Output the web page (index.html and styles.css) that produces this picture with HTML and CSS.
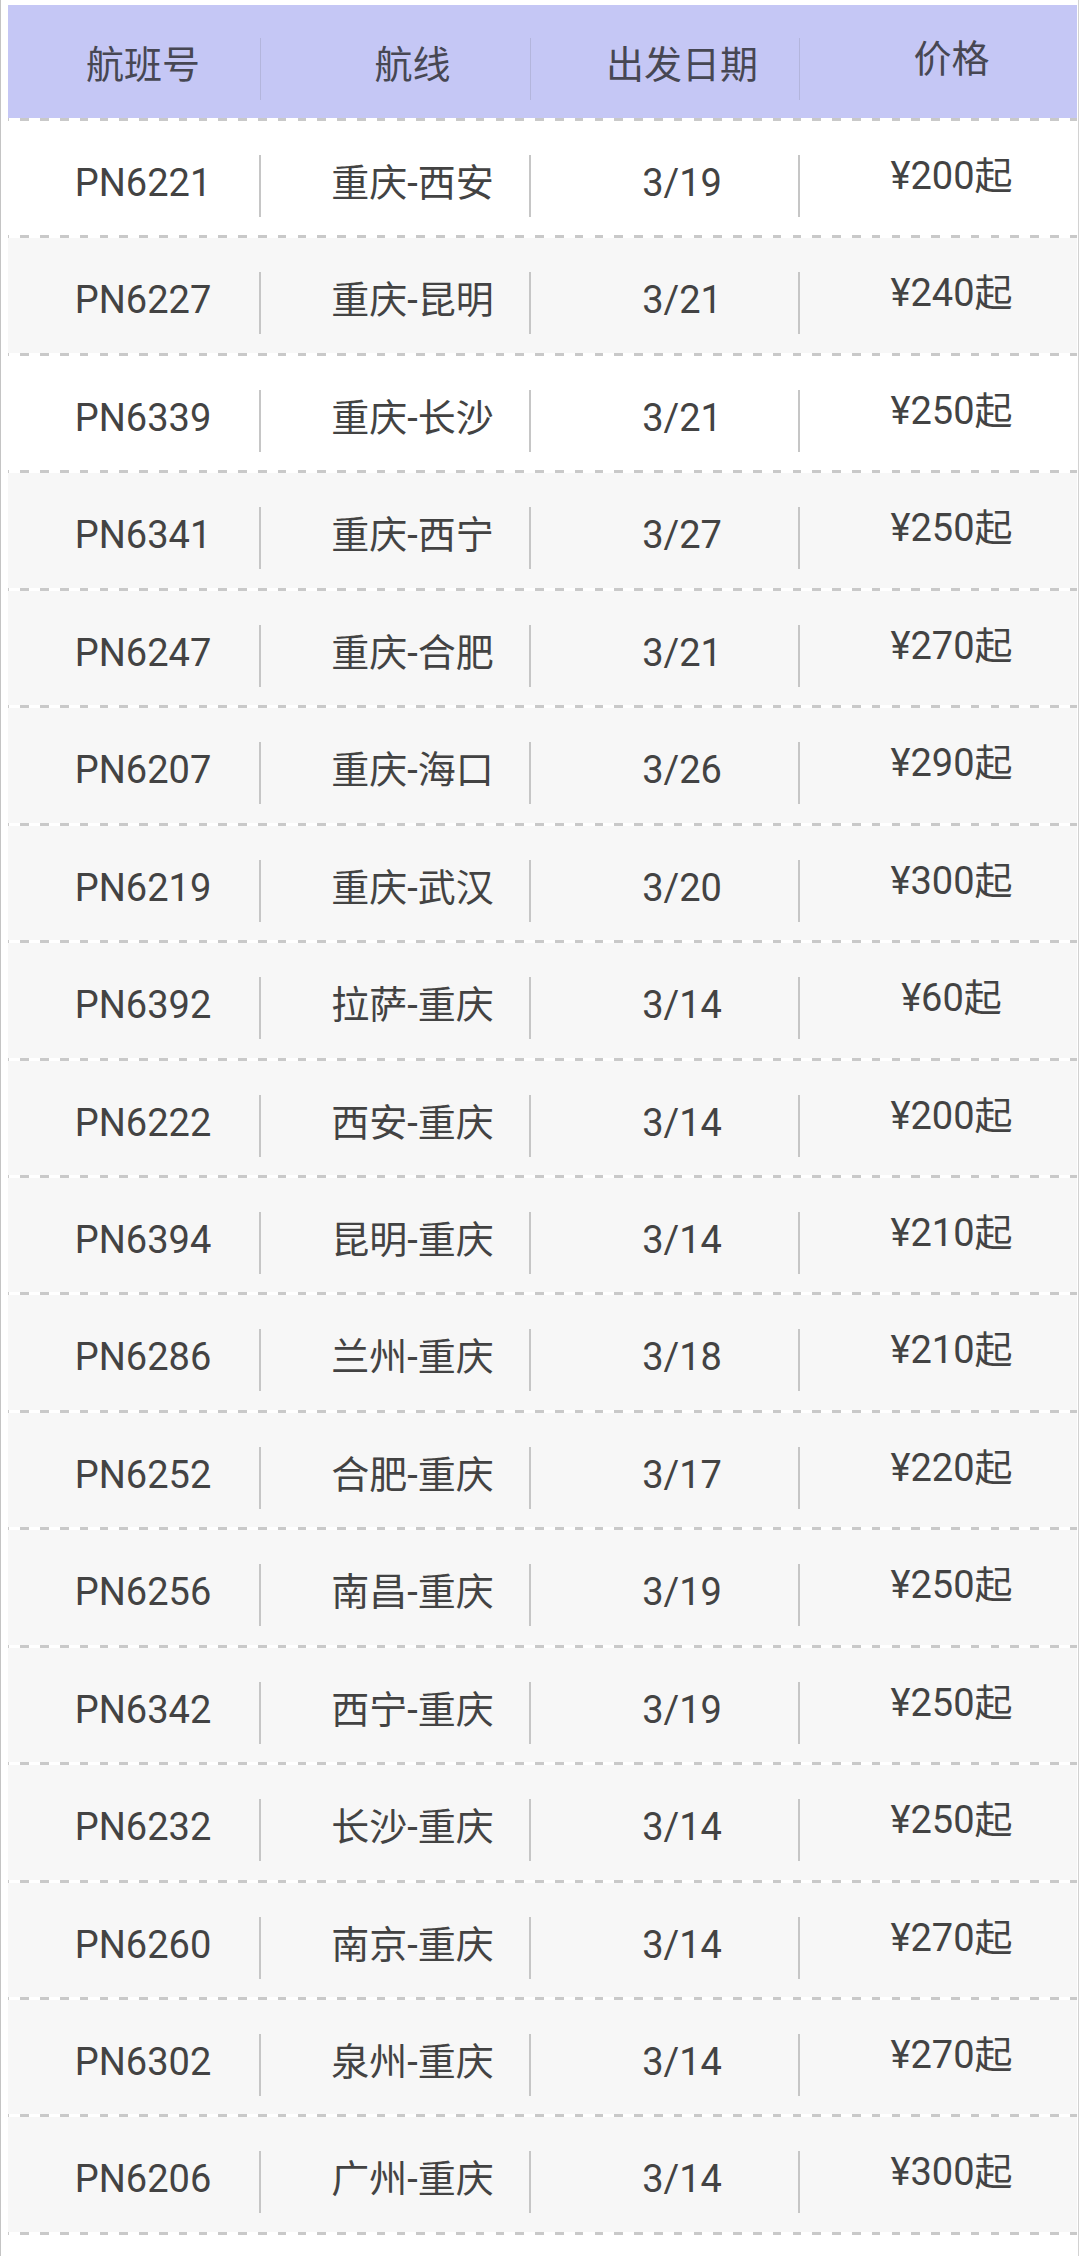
FILE: index.html
```html
<!DOCTYPE html>
<html lang="zh-CN">
<head>
<meta charset="utf-8">
<title>航班列表</title>
<link rel="stylesheet" href="styles.css">
</head>
<body>
<div class="frame">
  <div class="table">
    <div class="row head">
      <div class="cell">航班号</div>
      <div class="cell">航线</div>
      <div class="cell">出发日期</div>
      <div class="cell price">价格</div>
    </div>
    <div class="row white"><div class="cell">PN6221</div><div class="cell">重庆-西安</div><div class="cell">3/19</div><div class="cell price">¥200起</div></div>
    <div class="row"><div class="cell">PN6227</div><div class="cell">重庆-昆明</div><div class="cell">3/21</div><div class="cell price">¥240起</div></div>
    <div class="row white"><div class="cell">PN6339</div><div class="cell">重庆-长沙</div><div class="cell">3/21</div><div class="cell price">¥250起</div></div>
    <div class="row"><div class="cell">PN6341</div><div class="cell">重庆-西宁</div><div class="cell">3/27</div><div class="cell price">¥250起</div></div>
    <div class="row"><div class="cell">PN6247</div><div class="cell">重庆-合肥</div><div class="cell">3/21</div><div class="cell price">¥270起</div></div>
    <div class="row"><div class="cell">PN6207</div><div class="cell">重庆-海口</div><div class="cell">3/26</div><div class="cell price">¥290起</div></div>
    <div class="row"><div class="cell">PN6219</div><div class="cell">重庆-武汉</div><div class="cell">3/20</div><div class="cell price">¥300起</div></div>
    <div class="row"><div class="cell">PN6392</div><div class="cell">拉萨-重庆</div><div class="cell">3/14</div><div class="cell price">¥60起</div></div>
    <div class="row"><div class="cell">PN6222</div><div class="cell">西安-重庆</div><div class="cell">3/14</div><div class="cell price">¥200起</div></div>
    <div class="row"><div class="cell">PN6394</div><div class="cell">昆明-重庆</div><div class="cell">3/14</div><div class="cell price">¥210起</div></div>
    <div class="row"><div class="cell">PN6286</div><div class="cell">兰州-重庆</div><div class="cell">3/18</div><div class="cell price">¥210起</div></div>
    <div class="row"><div class="cell">PN6252</div><div class="cell">合肥-重庆</div><div class="cell">3/17</div><div class="cell price">¥220起</div></div>
    <div class="row"><div class="cell">PN6256</div><div class="cell">南昌-重庆</div><div class="cell">3/19</div><div class="cell price">¥250起</div></div>
    <div class="row"><div class="cell">PN6342</div><div class="cell">西宁-重庆</div><div class="cell">3/19</div><div class="cell price">¥250起</div></div>
    <div class="row"><div class="cell">PN6232</div><div class="cell">长沙-重庆</div><div class="cell">3/14</div><div class="cell price">¥250起</div></div>
    <div class="row"><div class="cell">PN6260</div><div class="cell">南京-重庆</div><div class="cell">3/14</div><div class="cell price">¥270起</div></div>
    <div class="row"><div class="cell">PN6302</div><div class="cell">泉州-重庆</div><div class="cell">3/14</div><div class="cell price">¥270起</div></div>
    <div class="row"><div class="cell">PN6206</div><div class="cell">广州-重庆</div><div class="cell">3/14</div><div class="cell price">¥300起</div></div>
  </div>
</div>
</body>
</html>
```
FILE: styles.css
```css
html, body {
  margin: 0;
  padding: 0;
  background: #ffffff;
}

body {
  width: 1080px;
  height: 2256px;
  overflow: hidden;
  font-family: Roboto, "Noto Sans CJK SC", sans-serif;
  color: #434343;
}

.frame {
  box-sizing: border-box;
  width: 1079px;
  height: 2256px;
  border-left: 1px solid #c4c4c4;
  border-right: 1px solid #d2d2d2;
  padding: 5px 1px 0 7px;
}

.table {
  overflow: hidden;
}

.row {
  --base: #f7f7f7;
  display: flex;
  align-items: flex-start;
  box-sizing: border-box;
  height: 117.44px;
  padding-top: 34px;
  background:
    repeating-linear-gradient(90deg, #c9c9c9 0 1.2px, transparent 1.2px 12.5px, #c9c9c9 12.5px 19.8px) left bottom / 100% 3px no-repeat,
    linear-gradient(#ffffff, #ffffff) left bottom / 100% 3px no-repeat,
    var(--base);
}

.row.white {
  --base: #ffffff;
}

.row.head {
  --base: #c5c7f5;
  height: 116px;
  padding-top: 33px;
  color: #474753;
}

.cell {
  flex: 0 0 253px;
  box-sizing: border-box;
  height: 62px;
  margin-right: 16.5px;
  padding-left: 19px;
  padding-bottom: 6px;
  display: flex;
  align-items: center;
  justify-content: center;
  font-size: 38px;
  line-height: 1;
  white-space: nowrap;
  border-right: 2px solid #c6c6c6;
}

.head .cell {
  border-right: 1px solid #b3b5dc;
  padding-right: 1px;
  padding-bottom: 8px;
}

.cell.price,
.head .cell.price {
  border-right: none;
  padding-right: 2px;
  padding-bottom: 20px;
}
```
